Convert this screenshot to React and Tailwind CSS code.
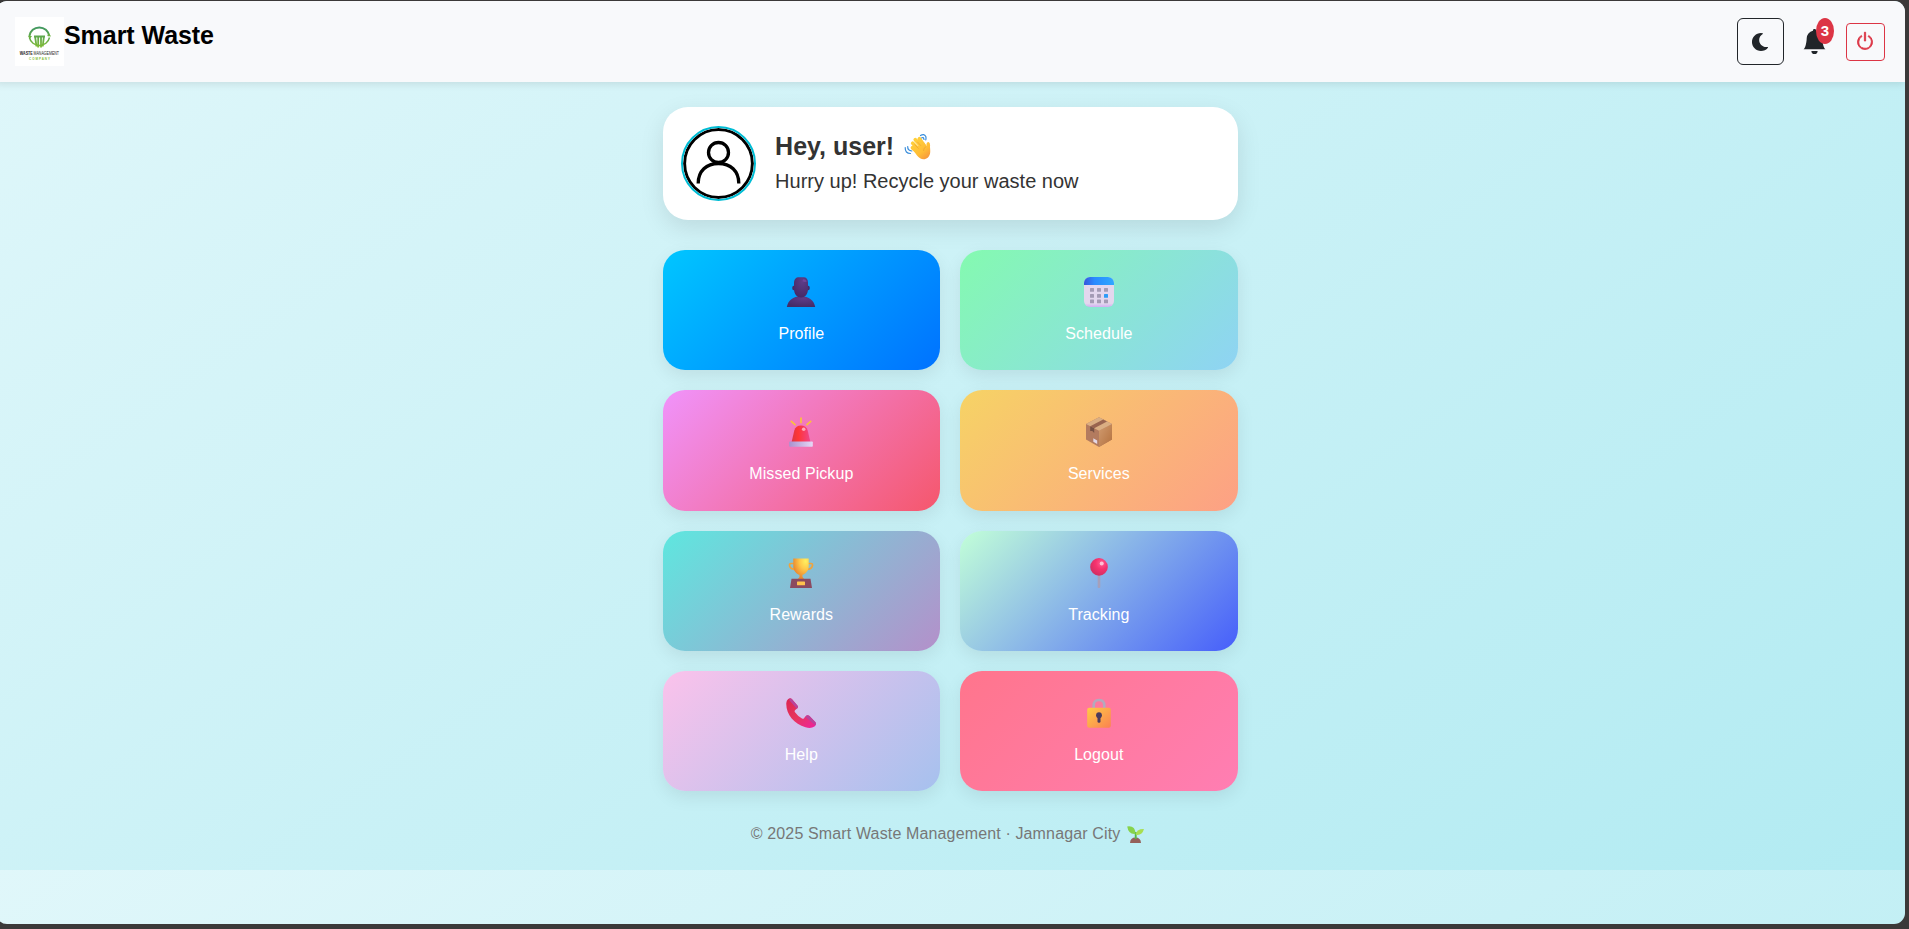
import React from "react";
import { BsBellFill, BsPower } from "react-icons/bs";
import { FaMoon } from "react-icons/fa";

const Person = () => (
  <svg viewBox="0 0 30 30" className="size-full">
    <defs>
      <radialGradient id="p1" cx=".6" cy=".2" r=".8"><stop offset="0" stopColor="#5f3c88" /><stop offset="1" stopColor="#452b67" /></radialGradient>
    </defs>
    <path d="M.8 30C2 23.500 7 19.300 15 19.300S28 23.500 29.200 30Z" fill="url(#p1)" />
    <ellipse cx="7.800" cy="11" rx="1.600" ry="2.300" fill="#452b67" />
    <ellipse cx="22.200" cy="11" rx="1.600" ry="2.300" fill="#452b67" />
    <path d="M8 6C8 2 10 .2 13 .2H18C21 .5 22 3 22 6V12C22 17 19 20.500 15 20.500S8 17 8 12Z" fill="url(#p1)" />
    <path d="M17 2.200Q20 1.800 20.800 4.500Q19 5.500 16.500 4.300Z" fill="#70479a" />
  </svg>
);

const Calendar = () => (
  <svg viewBox="0 0 30 30" className="size-full">
    <defs>
      <linearGradient id="c1"><stop offset="0" stopColor="#3656db" /><stop offset=".35" stopColor="#298aff" /><stop offset="1" stopColor="#30a8ff" /></linearGradient>
      <linearGradient id="c2" x2="0" y2="1"><stop offset=".88" stopColor="#e3d7ee" /><stop offset="1" stopColor="#d2aef2" /></linearGradient>
    </defs>
    <rect width="30" height="30" rx="6" fill="url(#c2)" />
    <path d="M0 8V6A6 6 0 0 1 6 0H24A6 6 0 0 1 30 6V8Z" fill="url(#c1)" />
    {[6, 13, 20].map((x) => [11, 17, 22.5].map((y) => (
      <rect key={x + "-" + y} x={x} y={y} width="4" height="3.800" rx=".5" fill={x === 20 && y === 17 ? "#2d9bf7" : "#a49bb5"} />
    )))}
  </svg>
);

const Siren = () => (
  <svg viewBox="0 0 30 30" className="size-full">
    <defs>
      <linearGradient id="s1"><stop offset="0" stopColor="#dc3545" /><stop offset=".35" stopColor="#ff3535" /><stop offset="1" stopColor="#f0458c" /></linearGradient>
      <linearGradient id="s2"><stop offset="0" stopColor="#a992cf" /><stop offset="1" stopColor="#e6d8f6" /></linearGradient>
    </defs>
    <path d="M15 1V5.500M5.300 4.300L9 7.600M24.700 4.300L21 7.600" stroke="#fbc238" strokeWidth="1.700" strokeLinecap="round" />
    <path d="M5.600 25L8.300 13.500Q9.800 8.500 15 8.500T21.700 13.500L24.400 25Z" fill="url(#s1)" />
    <circle cx="17.700" cy="12.300" r="1.800" fill="#ffa9b8" />
    <rect x="3.200" y="24.500" width="23.600" height="5.300" rx=".8" fill="url(#s2)" />
  </svg>
);

const Package = () => (
  <svg viewBox="0 0 30 30" className="size-full">
    <defs>
      <linearGradient id="b1" x2="1" y2="1"><stop offset="0" stopColor="#d09b70" /><stop offset="1" stopColor="#b4713e" /></linearGradient>
    </defs>
    <path d="M15 .3L28 7V22.500L15 30L2 22.500V7Z" fill="#b37b5f" />
    <path d="M15 13.800L28 7V22.500L15 30Z" fill="url(#b1)" />
    <path d="M2 7L15 .3L28 7L15 13.800Z" fill="#daae83" />
    <path d="M6.200 9.200L19.200 2.500L23 4.500L10.200 11.300Z" fill="#99644f" />
    <path d="M6.200 9.200L10.200 11.300V16L8.300 14L6.200 14Z" fill="#765044" />
    <path d="M9.300 21.200L13.200 23.400V27L9.300 24.700Z" fill="#e4d8e7" />
  </svg>
);

const Trophy = () => (
  <svg viewBox="0 0 30 30" className="size-full">
    <defs>
      <radialGradient id="t1" cx=".8" cy=".12" r=".85"><stop offset="0" stopColor="#fff05f" /><stop offset=".45" stopColor="#ffc94a" /><stop offset="1" stopColor="#e9872f" /></radialGradient>
    </defs>
    <path d="M8 5.500H5Q3.300 5.500 3.500 7.500C4 10.300 6.500 11.400 10 11.500M22 5.500H25Q26.700 5.500 26.500 7.500C26 10.300 23.500 11.400 20 11.500" fill="none" stroke="#efa33d" strokeWidth="1.700" />
    <path d="M7.300 .6H22.700V8.500C22.700 12.500 19.500 16 16.500 16.800V19L18.500 21.500H11.500L13.500 19V16.800C10.500 16 7.300 12.500 7.300 8.500Z" fill="url(#t1)" />
    <path d="M5.500 20.800H24.500L26 30H4Z" fill="#8b4a60" />
    <rect x="11" y="23.500" width="8" height="3.800" rx=".6" fill="#ffc34e" />
  </svg>
);

const Pin = () => (
  <svg viewBox="0 0 30 30" className="size-full">
    <defs>
      <radialGradient id="n1" cx=".65" cy=".3" r=".75"><stop offset="0" stopColor="#ff5d94" /><stop offset=".45" stopColor="#f6326e" /><stop offset="1" stopColor="#cf2e62" /></radialGradient>
    </defs>
    <rect x="13.700" y="16" width="2.600" height="14" rx="1" fill="#a5a0bb" />
    <circle cx="15" cy="8.900" r="8.800" fill="url(#n1)" />
    <circle cx="17.700" cy="5.600" r="2" fill="#ffc0d4" />
  </svg>
);

const Phone = () => (
  <svg viewBox="0 0 30 30" className="size-full">
    <defs>
      <linearGradient id="h1" x2="1" y2="1"><stop offset="0" stopColor="#dc2550" /><stop offset=".5" stopColor="#e7365e" /><stop offset="1" stopColor="#ee22a0" /></linearGradient>
    </defs>
    <path d="M2 1.300Q4-.6 5.600.8L12 8.300Q12.500 10.200 9.500 11.700Q8 12.800 9 14.300Q11.500 18 16 20.500Q18 21.300 18.500 19.500L20.500 17.500Q22 16.600 23.500 18L29.500 24.300Q30.800 26.700 28.500 28.500Q25 31 19.500 29.300C8 26-.2 16 .3 5Q.5 2.500 2 1.300Z" fill="url(#h1)" />
    <path d="M3.500.6Q5 0 6 1.300L12 8.200Q12.200 9.800 10.800 10.800L3.500 2.500ZM20.500 17.500Q22 16.600 23.500 18L29.500 24.300Q30.300 25.800 29.300 27.300L19.300 18.700Z" fill="#b9439b" />
  </svg>
);

const Lock = () => (
  <svg viewBox="0 0 30 30" className="size-full">
    <defs>
      <linearGradient id="l1" x2="1" y2="1"><stop offset="0" stopColor="#ffcb45" /><stop offset="1" stopColor="#fb8251" /></linearGradient>
    </defs>
    <path d="M9.700 11V7.500Q9.700 2 15 2T20.300 7.500V11" fill="none" stroke="#b4a9bd" strokeWidth="2.600" />
    <rect x="3.200" y="9.700" width="23.600" height="20" rx="2" fill="url(#l1)" />
    <circle cx="15" cy="17.200" r="2.900" fill="#4b3b5c" />
    <rect x="13.500" y="17" width="3" height="7.800" rx="1.400" fill="#4b3b5c" />
  </svg>
);

const Wave = () => (
  <svg viewBox="0 0 27 27" className="size-[27px]">
    <defs>
      <linearGradient id="w1" gradientUnits="userSpaceOnUse" x1="8" y1="6" x2="25" y2="27"><stop offset="0" stopColor="#ffd23b" /><stop offset=".6" stopColor="#ffbd35" /><stop offset="1" stopColor="#f58d3e" /></linearGradient>
    </defs>
    <g fill="none" stroke="#3b8edb" strokeWidth="1.200" strokeLinecap="round">
      <path d="M16.500 2.500Q20 .2 21.800 3.500Q22.300 5 21.800 6.800M17.500 5Q19.500 3.500 20 6.500" />
      <path d="M1.200 14.500Q1 20.500 6.500 20.500M3.700 13.500Q3.500 17.500 7.800 18" />
    </g>
    <g fill="none" stroke="url(#w1)" strokeLinecap="round" strokeWidth="3.700">
      <path d="M8.500 14.800L14.500 20M8.700 10.200L15.500 17M11.300 6.700L18 14M15.400 5.800L20.500 13" />
    </g>
    <path d="M11 15L20 9.500L22.500 13.500Q22 9 24.500 9Q26.500 9.500 26 14C26.500 19 26.500 22 24 24.500C20.500 27.500 16 26.500 13 22.500L9.500 17.500Z" fill="url(#w1)" />
    <path d="M10.500 11.500L14.500 15.500M13.300 8.800L17 12.800M22.300 13.500Q19.500 14.500 19.500 18" stroke="#e99a32" strokeWidth=".6" fill="none" />
  </svg>
);

const Sprout = () => (
  <svg viewBox="0 0 17 17" className="size-[17px]">
    <path d="M3 17Q3.300 11.500 8.500 11.500T14 17Z" fill="#95605a" />
    <path d="M8.700 13V6" stroke="#55b846" strokeWidth="1.900" />
    <path d="M8.700 7.800Q1.500 8.800.2.500Q8-.8 8.700 7.800Z" fill="#86d34b" />
    <path d="M8.700 8.800Q9.500 2.800 17 3.100Q15 10 8.700 8.800Z" fill="#a8de51" />
  </svg>
);

const Logo = () => (
  <svg viewBox="0 0 49 49" className="size-[49px] shrink-0 overflow-visible bg-white">
    <defs>
      <linearGradient id="g1" gradientUnits="userSpaceOnUse" x1="24" y1="8" x2="24" y2="31"><stop offset="0" stopColor="#3b9466" /><stop offset="1" stopColor="#83bd35" /></linearGradient>
    </defs>
    <g fill="none" stroke="url(#g1)">
      <path d="M14.400 19A10 10 0 0 1 34.200 19" strokeWidth="2" />
      <path d="M14.400 20.500A10.300 10.300 0 0 0 34.500 20.500" strokeWidth="1.500" />
      <path d="M19 19.500H30M20 19L21.500 29.300M23.200 19V30.500M26 19V30.500M29 19L27.700 29.300" strokeWidth="1.800" />
    </g>
    <path d="M13 19L14.800 22L17 19ZM32 19L34.300 16.500L36 19.500Z" fill="#6cb040" />
    <text x="4.800" y="38.200" fontSize="4.500" fontWeight="700" textLength="13" lengthAdjust="spacingAndGlyphs" fill="#222">WASTE</text>
    <text x="18.500" y="38.200" fontSize="4.500" textLength="25.500" lengthAdjust="spacingAndGlyphs" fill="#222">MANAGEMENT</text>
    <text x="14" y="43.200" fontSize="3" fontWeight="700" textLength="21" fill="#83bd35">COMPANY</text>
  </svg>
);

const tiles = [
  { label: "Profile", icon: Person, bg: "bg-[linear-gradient(135deg,#00c6ff,#0072ff)]" },
  { label: "Schedule", icon: Calendar, bg: "bg-[linear-gradient(135deg,#84fab0,#8fd3f4)]" },
  { label: "Missed Pickup", icon: Siren, bg: "bg-[linear-gradient(135deg,#f093fb,#f5576c)]" },
  { label: "Services", icon: Package, bg: "bg-[linear-gradient(135deg,#f6d365,#fda085)]" },
  { label: "Rewards", icon: Trophy, bg: "bg-[linear-gradient(135deg,#5ee7df,#b490ca)]" },
  { label: "Tracking", icon: Pin, bg: "bg-[linear-gradient(135deg,#c2ffd8,#465efb)]" },
  { label: "Help", icon: Phone, bg: "bg-[linear-gradient(135deg,#fbc2eb,#a6c1ee)]" },
  { label: "Logout", icon: Lock, bg: "bg-[linear-gradient(135deg,#ff758c,#ff7eb3)]" },
];

export default function App() {
  return (
    <div className="h-[929px] w-full overflow-hidden bg-[#3b3939] pt-px font-['Liberation_Sans',Arial,sans-serif]">
      <div className="-ml-1 h-[923px] w-[1909px] overflow-hidden rounded-[11px] bg-[linear-gradient(145deg,#e0f7fa,#b2ebf2)] bg-[length:100%_869px]">
        <header className="flex h-[81px] items-center justify-between bg-[#f8f9fb] pr-5 pl-[19px] shadow-[0_2px_8px_rgba(0,0,0,0.1)]">
          <div className="flex items-start">
            <Logo />
            <h1 className="pt-[3px] text-[25px] leading-[30px] font-bold tracking-[-0.05px] text-black">Smart Waste</h1>
          </div>
          <div className="flex items-center">
            <button className="flex size-[47px] items-center justify-center rounded-md border border-[#212529] pr-[2px] text-[#212529]">
              <FaMoon className="size-[18px]" />
            </button>
            <div className="relative ml-[19px] flex w-[22px] justify-center text-[#212529]">
              <BsBellFill className="size-[25px] shrink-0" />
              <span className="absolute -top-[11px] left-[13px] flex h-[26px] w-[18px] items-center justify-center rounded-[50%] bg-[#dc3545] text-[15px] font-bold text-white">3</span>
            </div>
            <button className="ml-[21px] flex h-[38px] w-[39px] items-center justify-center rounded border border-[#dc3545] pr-px pb-px text-[#dc3545]">
              <BsPower className="size-5 stroke-[0.7]" />
            </button>
          </div>
        </header>
        <div className="pr-[0.8px]">
          <main className="mx-auto w-[575px] pt-[25px]">
            <section className="flex h-[113px] items-center gap-[19.5px] rounded-[25px] bg-white px-[18px] shadow-[0_8px_25px_rgba(0,0,0,0.1)]">
              <div className="size-[75px] overflow-hidden rounded-full border-2 border-[#00bcd4] bg-white">
                <svg viewBox="0 0 71 71" className="size-full" fill="none" stroke="#000">
                  <circle cx="35.500" cy="35.500" r="33.900" strokeWidth="3" />
                  <circle cx="35.500" cy="24.500" r="10" strokeWidth="3.300" />
                  <path d="M15.200 55.500C15.200 43 23.500 35.500 35.500 35.500S55.800 43 55.800 55.500" strokeWidth="3.300" />
                </svg>
              </div>
              <div>
                <h2 className="flex items-center text-[25px] leading-[30px] font-bold text-[#333]">Hey, user!<span className="ml-[10px]"><Wave /></span></h2>
                <p className="mt-[5px] text-xl leading-[30px] text-[#333]">Hurry up! Recycle your waste now</p>
              </div>
            </section>
            <section className="mt-[30px] grid grid-cols-2 gap-5">
              {tiles.map(({ label, icon: Icon, bg }) => (
                <button key={label} className={"flex h-[120.33px] flex-col items-center rounded-[22px] pt-[27px] shadow-[0_6px_18px_rgba(0,0,0,0.08)] " + bg}>
                  <span className="size-[30px]"><Icon /></span>
                  <span className="mt-[15px] text-base leading-6 tracking-[0.07px] text-white">{label}</span>
                </button>
              ))}
            </section>
            <footer className="mt-[31px] flex h-6 items-center justify-center pr-[5px] text-base tracking-[0.14px] text-[#777]">
              © 2025 Smart Waste Management · Jamnagar City<span className="ml-[7px]"><Sprout /></span>
            </footer>
          </main>
        </div>
      </div>
    </div>
  );
}
